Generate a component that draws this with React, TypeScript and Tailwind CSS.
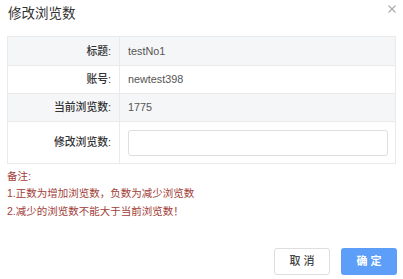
import React from "react";

const rows = [
  { label: "标题:", value: "testNo1", bg: "bg-[#f5f6f8]" },
  { label: "账号:", value: "newtest398", bg: "bg-white" },
  { label: "当前浏览数:", value: "1775", bg: "bg-[#f5f6f8]" },
];

export default function App() {
  return (
    <div
      className="w-[403px] h-[279px] bg-white relative overflow-hidden"
      style={{ fontFamily: '"Liberation Sans", "Noto Sans CJK SC", sans-serif' }}
    >
      <div className="h-[36px] pl-[8px] pt-[4px] text-[13.5px] leading-[19px] text-[#333]">修改浏览数</div>
      <button className="absolute right-[7px] top-[4px] w-[8px] h-[9px] text-[#aaa]">
        <svg viewBox="0 0 8 8" width="8" height="8" stroke="currentColor" strokeWidth="1.1">
          <path d="M0.5 0.5 L7.5 7.5 M7.5 0.5 L0.5 7.5" />
        </svg>
      </button>
      <div className="mx-[7px] border border-[#e9eaec] text-[10.8px]">
        {rows.map((r, i) => (
          <div key={i} className={`flex h-[28px] ${r.bg} ${i > 0 ? "border-t border-[#e9eaec]" : ""}`}>
            <div className="w-[112px] border-r border-[#e9eaec] flex items-center justify-end pr-[8px] text-[#333] font-medium">
              {r.label}
            </div>
            <div className="flex-1 flex items-center pl-[8px] text-[#555]">{r.value}</div>
          </div>
        ))}
        <div className="flex h-[42px] bg-white border-t border-[#e9eaec]">
          <div className="w-[112px] border-r border-[#e9eaec] flex items-center justify-end pr-[8px] text-[#333] font-medium">
            修改浏览数:
          </div>
          <div className="flex-1 flex items-center pl-[8px] pr-[7px]">
            <input className="w-full h-[26px] border border-[#dcdee2] rounded-[3px] outline-none px-[6px]" />
          </div>
        </div>
      </div>
      <div className="pl-[7px] pt-[4px] text-[10.5px] leading-[17.3px] text-[#a23d38]">
        <div>备注:</div>
        <div>1.正数为增加浏览数，负数为减少浏览数</div>
        <div>2.减少的浏览数不能大于当前浏览数！</div>
      </div>
      <div className="absolute right-[6px] top-[248px] flex gap-[11px]">
        <button className="w-[56px] h-[27px] border border-[#dcdee2] rounded-[3px] bg-white text-[11px] text-[#444] tracking-[3px] pl-[3px] font-medium">
          取消
        </button>
        <button className="w-[56px] h-[27px] rounded-[3px] bg-[#5c9ef8] text-white text-[11px] tracking-[3px] pl-[3px] font-bold">
          确定
        </button>
      </div>
    </div>
  );
}
